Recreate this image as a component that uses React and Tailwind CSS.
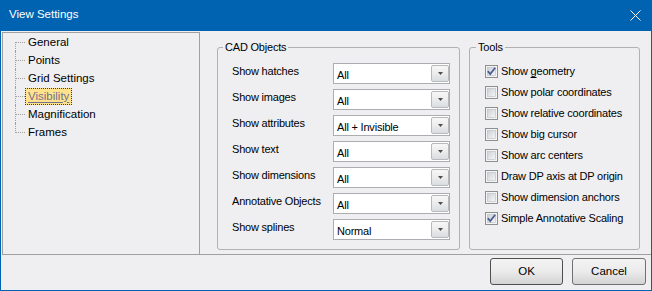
import React from "react";

const treeItems = ["General", "Points", "Grid Settings", "Visibility", "Magnification", "Frames"];
const combos = [
  ["Show hatches", "All"],
  ["Show images", "All"],
  ["Show attributes", "All + Invisible"],
  ["Show text", "All"],
  ["Show dimensions", "All"],
  ["Annotative Objects", "All"],
  ["Show splines", "Normal"],
];
const checks = [
  ["Show geometry", true, true],
  ["Show polar coordinates", false],
  ["Show relative coordinates", false],
  ["Show big cursor", false],
  ["Show arc centers", false],
  ["Draw DP axis at DP origin", false],
  ["Show dimension anchors", false],
  ["Simple Annotative Scaling", true],
];

function TreeRow({ label, index, last, selected }) {
  return (
    <div className="h-[18px] flex items-center">
      <div className="relative w-[22px] h-full shrink-0">
        <span
          className={
            "absolute left-[12px] w-0 border-l border-dotted border-[#a0a0a0] " +
            (index === 0 ? "top-[9px] bottom-0" : last ? "top-0 h-[10px]" : "top-0 bottom-0")
          }
        />
        <span className="absolute left-[13px] right-0 top-[9px] h-0 border-t border-dotted border-[#a0a0a0]" />
      </div>
      <span
        className={
          "h-[17px] leading-[15px] px-[2px] border border-dotted " +
          (selected
            ? "bg-[#ffe38c] border-[#3a3a3a] text-[#71708f] underline underline-offset-2"
            : "border-transparent text-[#000]")
        }
      >
        {label}
      </span>
    </div>
  );
}

function Combo({ value }) {
  return (
    <div className="w-[117px] h-[21px] border border-[#abadb3] bg-white flex items-center pl-[3px] shrink-0">
      <span className="flex-1 pt-[3px] leading-[15px]">{value}</span>
      <div className="w-[18px] h-[17px] rounded-[2px] border border-[#b9b9b9] bg-gradient-to-b from-[#f7f7f7] via-[#ececec] to-[#d9dce1] flex items-center justify-center">
        <svg width="5" height="3" viewBox="0 0 5 3">
          <path d="M0 0H5L2.5 3Z" fill="#4d4d4d" />
        </svg>
      </div>
    </div>
  );
}

function CheckBox({ checked }) {
  return (
    <svg width="13" height="13" viewBox="0 0 13 13" className="shrink-0">
      <defs>
        <linearGradient id="cbg" x1="0" y1="0" x2="1" y2="1">
          <stop offset="0" stopColor="#cbcfd5" />
          <stop offset="1" stopColor="#f7f7f7" />
        </linearGradient>
      </defs>
      <rect x="0.5" y="0.5" width="12" height="12" fill="#f4f4f4" stroke="#8e8f8f" />
      <rect x="2.5" y="2.5" width="8" height="8" fill="url(#cbg)" stroke="#b8bcc2" strokeWidth="0.6" />
      {checked && (
        <path d="M2.8 6.2 L5.2 9 L10.2 2.8" fill="none" stroke="#4a5f94" strokeWidth="1.8" />
      )}
    </svg>
  );
}

function Btn({ children, def }) {
  return (
    <button
      className={
        "h-[27px] rounded-[3px] border bg-gradient-to-b from-[#f3f3f3] via-[#ebebeb] to-[#d3d3d3] text-black text-[11.5px] " +
        (def ? "w-[73px] border-[#4f4f4f]" : "w-[74px] border-[#707070]")
      }
    >
      {children}
    </button>
  );
}

export default function App() {
  return (
    <div className="w-[652px] h-[291px] bg-[#0063b1] px-[1px] pb-[1px] flex flex-col font-['Liberation_Sans',Arial,sans-serif] overflow-hidden">
      <div className="h-[31px] shrink-0 flex items-center justify-between pl-[8px] pr-[10px] text-white text-[11.5px]">
        <span className="pb-[1px]">View Settings</span>
        <svg width="11" height="11" viewBox="0 0 11 11">
          <path d="M0.5 0.5L10.5 10.5M10.5 0.5L0.5 10.5" stroke="#fff" strokeWidth="1" />
        </svg>
      </div>
      <div className="flex-1 bg-[#efeff2] flex flex-col">
        <div className="h-[224px] pt-[1px] flex shrink-0">
          <div className="ml-[1px] w-[198px] h-full border border-[#a0a0a0] text-[11.5px] shrink-0">
            {treeItems.map((t, i) => (
              <TreeRow key={t} label={t} index={i} last={i === treeItems.length - 1} selected={t === "Visibility"} />
            ))}
          </div>
          <div className="flex-1 h-full border-b border-[#a0a0a0] flex pl-[17px] pt-[8px] gap-[9px] text-[11px] tracking-[-0.2px] text-black">
            <fieldset className="w-[243px] h-[210px] border border-[#b1b1b1] rounded-[3px]">
              <legend className="ml-[5px] px-[2px] leading-[15px]">CAD Objects</legend>
              <div className="pt-[8px] pl-[14px] flex flex-col gap-[5px]">
                {combos.map(([l, v]) => (
                  <div key={l} className="h-[21px] flex items-start">
                    <span className="w-[101px] shrink-0 leading-[15px] pt-[1px]">{l}</span>
                    <Combo value={v} />
                  </div>
                ))}
              </div>
            </fieldset>
            <fieldset className="w-[171px] h-[210px] border border-[#b1b1b1] rounded-[3px]">
              <legend className="ml-[6px] px-[2px] leading-[15px]">Tools</legend>
              <div className="pt-[6px] pl-[15px] flex flex-col">
                {checks.map(([l, c, ul]) => (
                  <div key={l} className="h-[21px] flex items-center gap-[3px]">
                    <CheckBox checked={c} />
                    <span className="leading-[15px]">
                      {ul ? (
                        <>
                          Show <span className="underline underline-offset-2">g</span>eometry
                        </>
                      ) : (
                        l
                      )}
                    </span>
                  </div>
                ))}
              </div>
            </fieldset>
          </div>
        </div>
        <div className="flex-1 flex justify-end items-start pt-[3px] pr-[5px] gap-[9px]">
          <Btn def>OK</Btn>
          <Btn>Cancel</Btn>
        </div>
      </div>
    </div>
  );
}
